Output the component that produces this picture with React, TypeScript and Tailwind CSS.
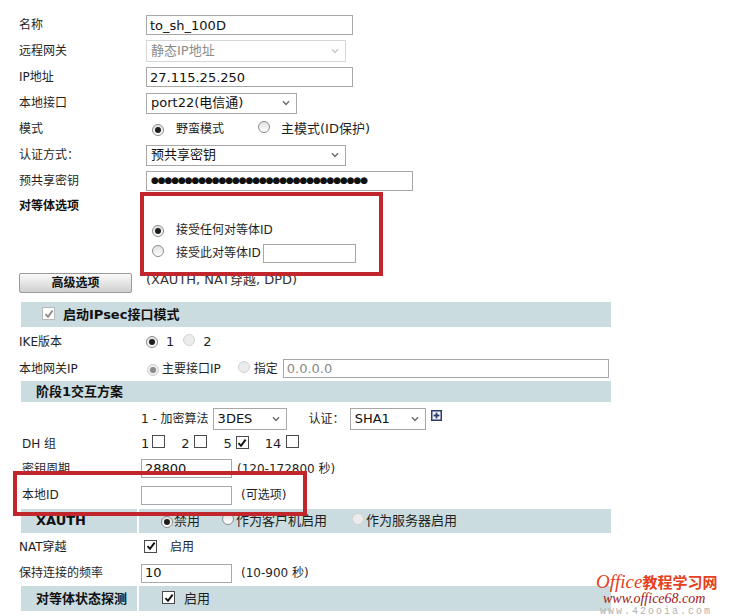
import { ReactNode } from "react";

const FONT = "font-['DejaVu_Sans','Noto_Sans_CJK_SC',sans-serif]";

const Radio = ({ checked = false, disabled = false }: { checked?: boolean; disabled?: boolean }) => (
  <span
    className={
      "inline-flex h-[12px] w-[12px] shrink-0 items-center justify-center rounded-full border " +
      (disabled ? "border-[#d2d2d2] bg-[#ececec]" : "border-[#8c8c8c] bg-linear-to-b from-[#e2e2e2] to-white")
    }
  >
    {checked && <span className={"h-[6px] w-[6px] rounded-full " + (disabled ? "bg-[#8a8a8a]" : "bg-[#1e1e1e]")} />}
  </span>
);

const Check = ({ checked = false, muted = false }: { checked?: boolean; muted?: boolean }) => (
  <span
    className={
      "inline-flex h-[13px] w-[13px] shrink-0 items-center justify-center border bg-white " +
      (muted ? "border-[#b8b8b8]" : "border-[#4a4a4a]")
    }
  >
    {checked && (
      <svg width="10" height="10" viewBox="0 0 10 10">
        <path d="M1.5 5.2 L4 7.8 L8.6 1.6" fill="none" stroke={muted ? "#8d8d8d" : "#111"} strokeWidth="1.9" />
      </svg>
    )}
  </span>
);

const Input = ({ w, value = "", h = 20, muted = false }: { w: number; value?: string; h?: number; muted?: boolean }) => (
  <input
    readOnly
    value={value}
    style={{ width: w, height: h }}
    className={
      FONT +
      " shrink-0 border border-[#a8a8a8] bg-white px-[3px] text-[13px] outline-none " +
      (muted ? "text-[#8a8a8a]" : "text-[#111]")
    }
  />
);

const Select = ({ w, value, h = 21, disabled = false }: { w: number; value: string; h?: number; disabled?: boolean }) => (
  <div
    style={{ width: w, height: h }}
    className={
      "flex shrink-0 items-center justify-between border bg-white pl-[4px] pr-[6px] text-[13px] " +
      (disabled ? "border-[#d6d6d6] text-[#8c8c8c]" : "border-[#a8a8a8] text-[#111]")
    }
  >
    <span className="whitespace-nowrap">{value}</span>
    <svg width="8" height="6" viewBox="0 0 8 6">
      <path d="M1 1.2 L4 4.4 L7 1.2" fill="none" stroke={disabled ? "#c8c8c8" : "#6a6a6a"} strokeWidth="1.4" />
    </svg>
  </div>
);

const Row = ({ label, h = 26, labelClass = "", children }: { label?: string; h?: number; labelClass?: string; children?: ReactNode }) => (
  <div className="flex items-center" style={{ height: h }}>
    <div className={"w-[127px] shrink-0 whitespace-nowrap " + labelClass}>{label}</div>
    <div className="flex items-center">{children}</div>
  </div>
);

const Bar = ({ children, h = 25 }: { children: ReactNode; h?: number }) => (
  <div className="ml-[2px] flex w-[590px] items-center bg-[#cadcdf]" style={{ height: h }}>
    {children}
  </div>
);

const SplitBar = ({ title, h, children }: { title: string; h: number; children: ReactNode }) => (
  <div className="ml-[2px] flex w-[590px]" style={{ height: h }}>
    <div className="flex w-[116px] items-center bg-[#cadcdf] pl-[15px] text-[13px] font-bold text-[#111]">{title}</div>
    <div className="ml-[2px] flex flex-1 items-center bg-[#cadcdf] text-[13px]">{children}</div>
  </div>
);

export default function App() {
  return (
    <div className={FONT + " relative h-[616px] w-[734px] overflow-hidden bg-white text-[12px] text-[#1f1f1f]"}>
      <div className="pl-[19px] pt-[12px]">
        <Row label="名称">
          <Input w={207} value="to_sh_100D" />
        </Row>
        <Row label="远程网关">
          <Select w={200} h={22} value="静态IP地址" disabled />
        </Row>
        <Row label="IP地址">
          <Input w={207} value="27.115.25.250" />
        </Row>
        <Row label="本地接口">
          <Select w={151} value="port22(电信通)" />
        </Row>
        <Row label="模式">
          <span className="ml-[6px]"><Radio checked /></span>
          <span className="ml-[12px]">野蛮模式</span>
          <span className="ml-[34px]"><Radio /></span>
          <span className="ml-[11px] text-[13px]">主模式(ID保护)</span>
        </Row>
        <Row label="认证方式：">
          <Select w={200} value="预共享密钥" />
        </Row>
        <Row label="预共享密钥">
          <div className="flex h-[20px] w-[267px] items-center overflow-hidden whitespace-nowrap border border-[#a8a8a8] bg-white pl-[4px] text-[9px] tracking-[-1.1px] text-[#111]">
            {"●".repeat(32)}
          </div>
        </Row>
        <Row label="对等体选项" h={24} labelClass="font-bold text-[#111]" />
        <Row h={24}>
          <span className="ml-[6px]"><Radio checked /></span>
          <span className="ml-[12px]">接受任何对等体ID</span>
        </Row>
        <Row h={22}>
          <span className="ml-[6px]"><Radio /></span>
          <span className="ml-[12px]">接受此对等体ID</span>
          <span className="ml-[2px] flex"><Input w={93} h={19} /></span>
        </Row>

        <div className="mt-[9px] flex h-[20px] items-center">
          <button className="h-[20px] w-[113px] rounded-[2px] border border-[#9a9a9a] bg-linear-to-b from-[#fbfbfb] to-[#cfcfcf] text-[12px] font-bold text-[#111]">
            高级选项
          </button>
          <span className="mb-[7px] ml-[14px] text-[13px] text-[#333]">(XAUTH, NAT穿越, DPD)</span>
        </div>

        <div className="mt-[9px]">
          <Bar h={25}>
            <span className="ml-[21px]"><Check checked muted /></span>
            <span className="ml-[8px] text-[13px] font-bold text-[#111]">启动IPsec接口模式</span>
          </Bar>
        </div>

        <Row label="IKE版本" h={30}>
          <Radio checked />
          <span className="ml-[8px] text-[13px]">1</span>
          <span className="ml-[9px]"><Radio disabled /></span>
          <span className="ml-[8px] text-[13px]">2</span>
        </Row>
        <Row label="本地网关IP" h={23}>
          <span className="ml-[1px]"><Radio checked disabled /></span>
          <span className="ml-[3px]">主要接口IP</span>
          <span className="ml-[17px]"><Radio disabled /></span>
          <span className="ml-[4px]">指定</span>
          <span className="ml-[5px] flex"><Input w={326} h={19} value="0.0.0.0" muted /></span>
        </Row>

        <div className="mt-[1px]">
          <Bar h={21}>
            <span className="ml-[15px] text-[13px] font-bold text-[#111]">阶段1交互方案</span>
          </Bar>
        </div>

        <div className="mt-[2px] flex h-[30px] items-center pl-[122px]">
          <span>1 - 加密算法</span>
          <span className="ml-[4px]"><Select w={74} h={22} value="3DES" /></span>
          <span className="ml-[22px]">认证：</span>
          <span className="ml-[5px]"><Select w={76} h={22} value="SHA1" /></span>
          <svg className="mb-[7px] ml-[5px]" width="11" height="11" viewBox="0 0 11 11">
            <rect x="0" y="0" width="11" height="11" fill="#2f3c6e" />
            <rect x="1.5" y="1.5" width="8" height="8" fill="#f4f6fb" />
            <rect x="4.6" y="2.6" width="1.8" height="5.8" fill="#2f3c6e" />
            <rect x="2.6" y="4.6" width="5.8" height="1.8" fill="#2f3c6e" />
          </svg>
        </div>

        <div className="flex h-[19px] items-center text-[13px]">
          <span className="w-[122px] shrink-0 pl-[3px] text-[12px]">DH 组</span>
          <span>1</span>
          <span className="ml-[3px]"><Check /></span>
          <span className="ml-[16px]">2</span>
          <span className="ml-[4px]"><Check /></span>
          <span className="ml-[17px]">5</span>
          <span className="ml-[4px]"><Check checked /></span>
          <span className="ml-[16px]">14</span>
          <span className="ml-[5px]"><Check /></span>
        </div>

        <div className="flex h-[31px] items-center">
          <span className="w-[122px] shrink-0 pl-[3px]">密钥周期</span>
          <Input w={91} h={19} value="28800" />
          <span className="ml-[5px]">(120-172800 秒)</span>
        </div>
        <div className="flex h-[22px] items-center">
          <span className="w-[122px] shrink-0 pl-[3px]">本地ID</span>
          <Input w={91} h={19} />
          <span className="ml-[9px]">(可选项)</span>
        </div>

        <div className="mt-[3px]">
          <SplitBar title="XAUTH" h={24}>
            <span className="ml-[22px]"><Radio checked /></span>
            <span className="ml-[1px]">禁用</span>
            <span className="ml-[22px]"><Radio /></span>
            <span className="ml-[2px]">作为客户机启用</span>
            <span className="ml-[25px]"><Radio disabled /></span>
            <span className="ml-[2px]">作为服务器启用</span>
          </SplitBar>
        </div>

        <Row label="NAT穿越" h={28}>
          <span className="-ml-[2px]"><Check checked /></span>
          <span className="ml-[13px]">启用</span>
        </Row>
        <div className="flex h-[24px] items-center">
          <span className="w-[122px] shrink-0">保持连接的频率</span>
          <Input w={91} h={19} value="10" />
          <span className="ml-[9px]">(10-900 秒)</span>
        </div>

        <div className="mt-[1px]">
          <SplitBar title="对等体状态探测" h={25}>
            <span className="ml-[23px]"><Check checked /></span>
            <span className="ml-[9px]">启用</span>
          </SplitBar>
        </div>
      </div>

      {/* highlight boxes */}
      <div className="absolute left-[140px] top-[192px] h-[84px] w-[243px] border-[4px] border-[#c1262d]" />
      <div className="absolute left-[13px] top-[471px] h-[45px] w-[294px] border-[4px] border-[#c1262d]" />

      {/* watermark */}
      <div className="absolute left-[596px] top-[572px] leading-none">
        <div className="flex items-baseline whitespace-nowrap text-[#e5411d]">
          <span className="font-['Liberation_Serif',serif] text-[19px] italic">Office</span>
          <span className="font-['Noto_Sans_CJK_SC',sans-serif] text-[15px] font-bold">教程学习网</span>
        </div>
        <div className="mt-[1px] flex w-[134px] flex-col">
          <span className="pl-[7px] font-['Liberation_Serif',serif] text-[14px] italic leading-[13px] text-[#a31515]">
            www.office68.com
          </span>
          <span className="mt-[2px] pl-[4px] font-['Liberation_Mono',monospace] text-[10px] leading-[10px] tracking-[2px] text-[#b4b4b4]">
            www.42ooia.com
          </span>
        </div>
      </div>
    </div>
  );
}
